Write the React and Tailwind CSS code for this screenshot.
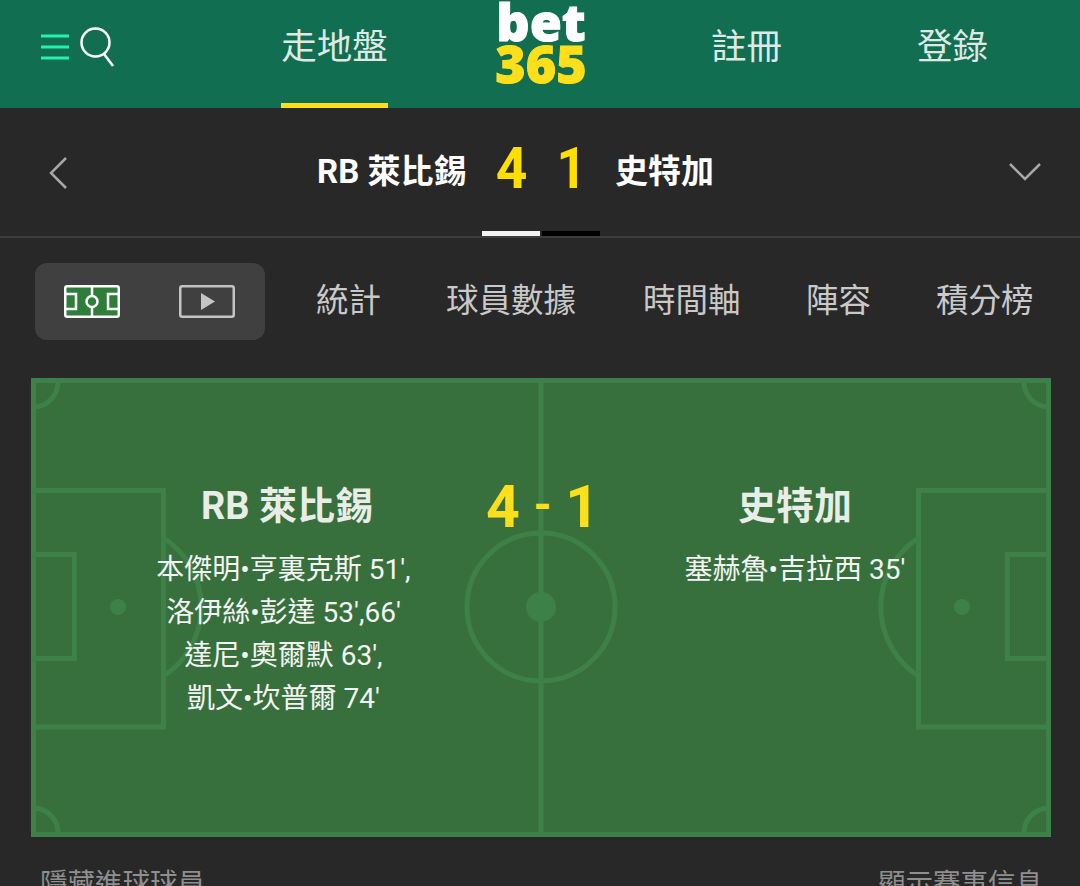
import React from "react";

const CJK = "font-['Roboto','Noto_Sans_CJK_TC','Noto_Sans_CJK_SC',sans-serif]";

const PitchLines = () => (
  <svg
    className="absolute inset-0 w-full h-full"
    viewBox="0 0 1020 459"
    fill="none"
    stroke="#3e8148"
    strokeWidth="5"
  >
    <rect x="2.5" y="2.5" width="1015" height="454" />
    <path d="M510 0V459" />
    <circle cx="510" cy="229" r="74" />
    <circle cx="510" cy="229" r="15" fill="#3e8148" stroke="none" />
    {/* left end */}
    <path d="M3 112.5H132.5V349H3" />
    <path d="M3 176.5H43.5V280.5H3" />
    <circle cx="87" cy="229" r="8" fill="#3e8148" stroke="none" />
    <path d="M132.5 160A82 82 0 0 1 132.5 298" />
    {/* right end */}
    <path d="M1017 112.5H887.5V349H1017" />
    <path d="M1017 176.5H976.5V280.5H1017" />
    <circle cx="931" cy="229" r="8" fill="#3e8148" stroke="none" />
    <path d="M887.5 160A82 82 0 0 0 887.5 298" />
    {/* corners */}
    <path d="M3 29A25 25 0 0 0 27 5" />
    <path d="M1017 29A25 25 0 0 1 993 5" />
    <path d="M3 430A25 25 0 0 1 27 454" />
    <path d="M1017 430A25 25 0 0 0 993 454" />
  </svg>
);

const FieldIcon = () => (
  <svg width="56" height="33" viewBox="0 0 56 33">
    <rect x="1.25" y="1.25" width="53.5" height="30.5" rx="2" fill="#2e7d3a" stroke="#fff" strokeWidth="2.5" />
    <path d="M28 1V32M1 9H12V24H1M55 9H44V24H55" fill="none" stroke="#fff" strokeWidth="2.5" />
    <circle cx="28" cy="16.5" r="5.5" fill="#2e7d3a" stroke="#fff" strokeWidth="2.5" />
  </svg>
);

const VideoIcon = () => (
  <svg width="56" height="33" viewBox="0 0 56 33">
    <rect x="1.25" y="1.25" width="53.5" height="30.5" rx="2" fill="none" stroke="#c4c4c4" strokeWidth="2.5" />
    <path d="M22 8L36 16.5L22 25Z" fill="#c4c4c4" />
  </svg>
);

export default function App() {
  return (
    <div className={`w-[1080px] h-[886px] overflow-hidden bg-[#282828] ${CJK}`}>
      {/* Top Navigation Bar */}
      <div className="h-[108px] bg-[#126e51] flex relative">
        <div className="w-[281px] flex items-center pl-[41px] gap-[11px] pb-[14px]">
          <svg width="28" height="26" viewBox="0 0 28 26" stroke="#26f0b0" strokeWidth="3">
            <path d="M0 2H28M0 13H28M0 24H28" />
          </svg>
          <svg width="36" height="40" viewBox="0 0 36 40" fill="none" stroke="#fff" strokeWidth="2.5">
            <circle cx="15.5" cy="15.5" r="14" />
            <path d="M24 27L33 39" />
          </svg>
        </div>
        <div className="w-[107px] h-full border-b-[5px] border-[#ffdf1b] text-[35.5px] leading-[94px] text-center text-[#dfe8e4] whitespace-nowrap">
          走地盤
        </div>
        <div className="w-[306px] flex flex-col items-center font-['Noto_Sans',sans-serif] font-black text-[52px] leading-[42px] [-webkit-text-stroke:1px]">
          <span className="text-white">bet</span>
          <span className="text-[#ffdf1b]">365</span>
        </div>
        <div className="ml-[17px] w-[71px] text-[35.5px] leading-[94px] text-center text-[#dfe8e4] whitespace-nowrap">註冊</div>
        <div className="ml-[135px] w-[71px] text-[35.5px] leading-[94px] text-center text-[#dfe8e4] whitespace-nowrap">登錄</div>
      </div>

      {/* Score bar */}
      <div className="h-[130px] border-b-2 border-[#3d3d3d] relative flex items-center pl-[317px]">
        <svg className="absolute left-[48px] top-[49px]" width="20" height="32" viewBox="0 0 20 32" fill="none" stroke="#a8a8a8" strokeWidth="2.5">
          <path d="M18 1L3 16L18 31" />
        </svg>
        <div className="flex items-center">
          <span className="text-[33px] font-bold text-white whitespace-nowrap w-[148px]">RB 萊比錫</span>
          <span className="text-[58px] leading-[60px] font-bold text-[#ffdf00] w-[30px] ml-[30px] mb-[8px] text-center scale-x-[0.95]">4</span>
          <span className="text-[58px] leading-[60px] font-bold text-[#ffdf00] w-[30px] ml-[30px] mb-[8px] text-center scale-x-[0.9]">1</span>
          <span className="text-[33px] font-bold text-white ml-[30px] whitespace-nowrap">史特加</span>
        </div>
        <svg className="absolute left-[1009px] top-[54px]" width="32" height="20" viewBox="0 0 32 20" fill="none" stroke="#a8a8a8" strokeWidth="2.5">
          <path d="M1 2L16 17L31 2" />
        </svg>
        <div className="absolute left-[482px] bottom-0 flex gap-[2px]">
          <div className="w-[58px] h-[5px] bg-[#f2f2f2]" />
          <div className="w-[58px] h-[5px] bg-black" />
        </div>
      </div>

      {/* Tabs */}
      <div className="h-[140px] pl-[35px] pt-[25px] flex items-start">
        <div className="w-[230px] h-[77px] rounded-xl bg-[#404040] flex items-center justify-between pl-[29px] pr-[30px]">
          <FieldIcon />
          <VideoIcon />
        </div>
        <div className="h-[77px] flex items-center text-[32.5px] text-[#c9c9c9] whitespace-nowrap">
          <span className="ml-[51px] w-[66px]">統計</span>
          <span className="ml-[64px] w-[132px]">球員數據</span>
          <span className="ml-[65px] w-[99px]">時間軸</span>
          <span className="ml-[64px] w-[66px]">陣容</span>
          <span className="ml-[64px] w-[99px]">積分榜</span>
        </div>
      </div>

      {/* Pitch */}
      <div className="ml-[31px] w-[1020px] h-[459px] bg-[#37703c] relative">
        <PitchLines />
        <div className="relative flex items-start pt-[97px] text-[#f4f4f4]">
          <div className="w-[504px] flex flex-col items-center">
            <div className="text-[38px] leading-[62px] font-bold text-[#e8ede8] whitespace-nowrap pl-[8px]">RB 萊比錫</div>
            <div className="text-[28px] leading-[43px] text-center mt-[11px] whitespace-nowrap pl-[1px]">
              <div>本傑明•亨裏克斯 51',</div>
              <div>洛伊絲•彭達 53',66'</div>
              <div>達尼•奧爾默 63',</div>
              <div>凱文•坎普爾 74'</div>
            </div>
          </div>
          <div className="absolute left-[455px] top-[98px] text-[59px] leading-[62px] font-bold text-[#ffdf1b] whitespace-nowrap [word-spacing:-1px]">
            4 <span className="inline-block text-[46px] -translate-y-[6px]">-</span> 1
          </div>
          <div className="ml-[33px] w-[450px] flex flex-col items-center">
            <div className="text-[38px] leading-[62px] font-bold text-[#e8ede8] whitespace-nowrap pl-[4px]">史特加</div>
            <div className="text-[28px] leading-[43px] text-center mt-[11px] whitespace-nowrap pl-[4px]">塞赫魯•吉拉西 35'</div>
          </div>
        </div>
      </div>

      {/* Footer links */}
      <div className="flex justify-between pl-[40px] pr-[37px] pt-[29px] text-[27.5px] leading-[36px] text-[#8f8f8f]">
        <span>隱藏進球球員</span>
        <span>顯示賽事信息</span>
      </div>
    </div>
  );
}
